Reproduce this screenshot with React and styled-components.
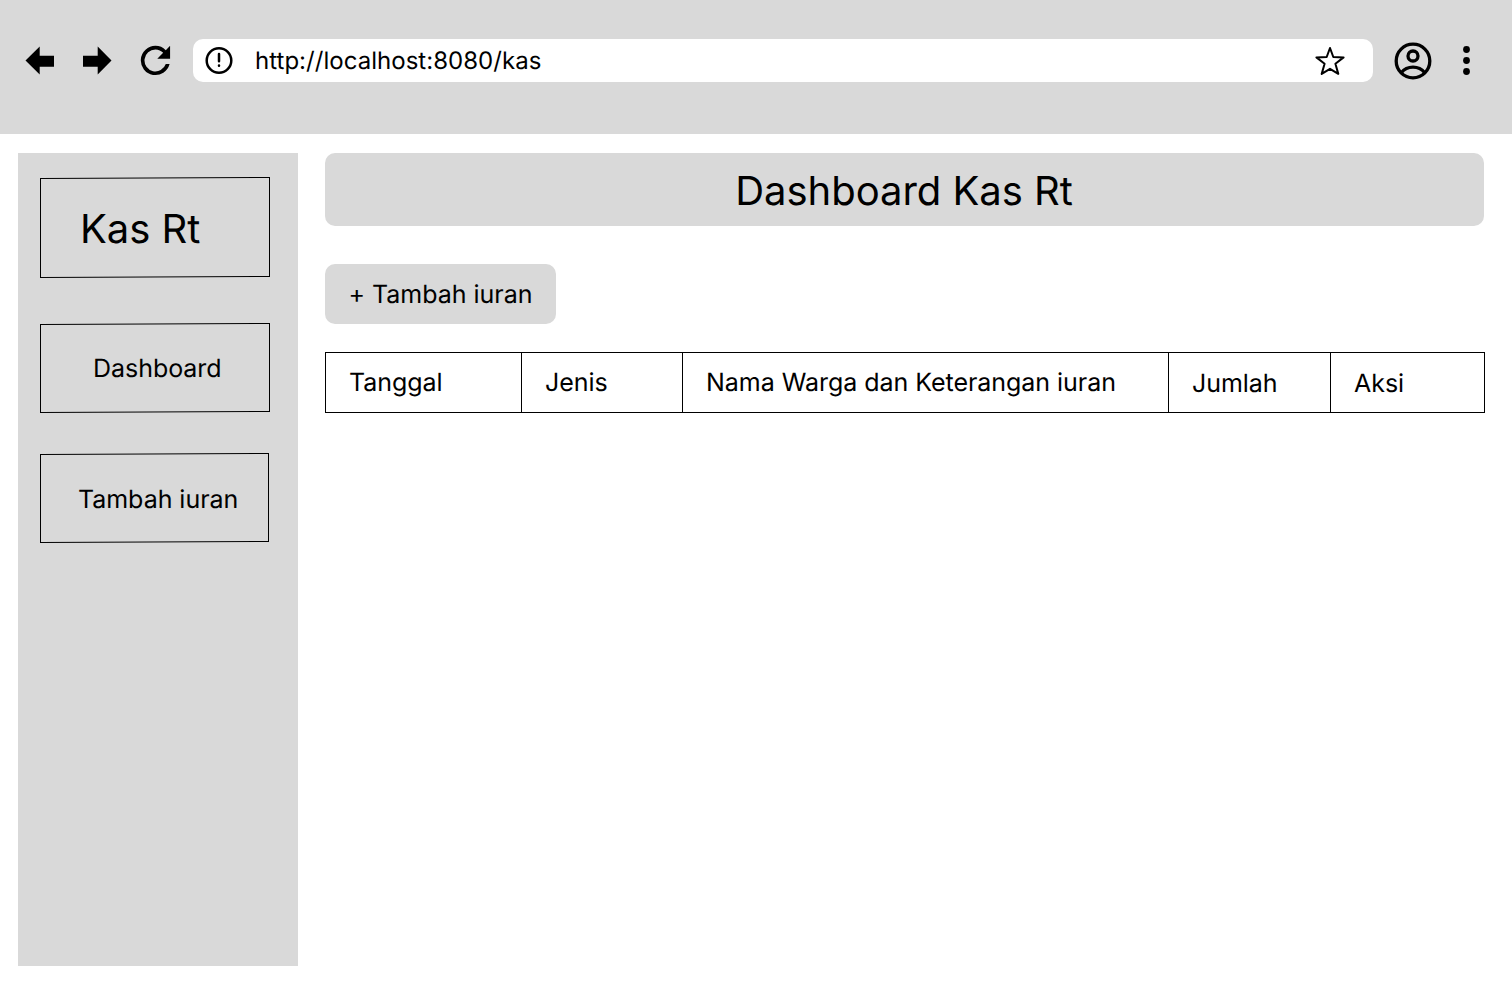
import React from 'react';
import styled, { createGlobalStyle } from 'styled-components';

const GlobalStyle = createGlobalStyle`
  *, *::before { box-sizing: border-box; }
  body {
    margin: 0;
    background: #fff;
    color: #000;
    font-family: Inter, "Liberation Sans", sans-serif;
    text-rendering: geometricPrecision;
  }
`;

const GREY = '#d9d9d9';

const Page = styled.div`
  display: flex;
  flex-direction: column;
  width: 1512px;
  height: 982px;
  overflow: hidden;
`;

const BrowserBar = styled.header`
  display: flex;
  align-items: flex-start;
  height: 134px;
  padding: 39px 36px 0 25px;
  background: ${GREY};
`;

const NavIcons = styled.nav`
  display: flex;
  align-items: center;
  height: 42px;
  width: 168px;
  gap: 27px;
`;

const Icon = styled.svg`
  display: block;
  flex: none;
`;

const AddressBar = styled.div`
  display: flex;
  align-items: center;
  width: 1180px;
  height: 43px;
  padding: 0 27px 0 11px;
  border-radius: 10px;
  background: #fff;
`;

const Url = styled.span`
  flex: 1;
  margin-left: 21px;
  font-size: 24px;
  line-height: 43px;
  letter-spacing: 0.03px;
`;

const AccountIcons = styled.div`
  display: flex;
  align-items: center;
  height: 43px;
  margin-left: 20px;
  gap: 28px;
`;

const Body = styled.div`
  display: flex;
  flex: 1;
  gap: 27px;
  padding: 19px 27px 16px 18px;
`;

const Sidebar = styled.aside`
  display: flex;
  flex-direction: column;
  width: 280px;
  padding: 24px 22px;
  background: ${GREY};
`;

const MenuBox = styled.div`
  position: relative;
  width: ${(p) => p.$width || 230}px;
  height: ${(p) => p.$height}px;
  margin-bottom: ${(p) => p.$after || 0}px;
  padding: ${(p) => p.$padding};
  font-size: ${(p) => p.$size || 25}px;
  line-height: ${(p) => p.$line || 30}px;
  letter-spacing: -0.04px;
  white-space: nowrap;

  &::before {
    content: '';
    position: absolute;
    inset: 0 0 1px;
    border: 1px solid #000;
    transform: translateY(0.5px) skewY(-0.25deg);
  }
`;

const Main = styled.main`
  display: flex;
  flex-direction: column;
  align-items: flex-start;
  width: 1160px;
`;

const Title = styled.h1`
  width: 1159px;
  height: 73px;
  margin: 0 0 38px;
  padding-right: 1px;
  border-radius: 10px;
  background: ${GREY};
  font-size: 40px;
  font-weight: 400;
  line-height: 75px;
  letter-spacing: -0.04px;
  text-align: center;
`;

const AddButton = styled.button`
  width: 231px;
  height: 60px;
  margin: 0 0 28px;
  padding: 2px 0 0;
  border: 0;
  border-radius: 10px;
  background: ${GREY};
  color: inherit;
  font: 25px/58px Inter, "Liberation Sans", sans-serif;
  letter-spacing: -0.03px;
  text-rendering: inherit;
  white-space: nowrap;
`;

const TableHead = styled.div`
  display: grid;
  grid-template-columns: 196px 161px 486px 162px 153px;
  width: 1160px;
  height: 61px;
  border: 1px solid #000;
`;

const HeadCell = styled.div`
  padding: ${(p) => p.$top || 1}px 0 0 23px;
  border-right: 1px solid #000;
  font-size: 25px;
  line-height: 59px;
  height: 59px;
  letter-spacing: -0.04px;
  white-space: nowrap;

  &:last-child { border-right: 0; }
`;

const BackIcon = () => (
  <Icon width="30" height="30" viewBox="0 0 30 30">
    <path d="M.5 15.5 14.7 1.5v9.2H29v11H14.7V29.5Z" />
  </Icon>
);

const ForwardIcon = () => (
  <Icon width="30" height="30" viewBox="0 0 30 30">
    <path d="M29.5 15.5 15.7 1.5v9.2H1v11h14.7V29.5Z" />
  </Icon>
);

const ReloadIcon = () => (
  <Icon width="32" height="32" viewBox="3 3 17.5 17.5">
    <path d="M17.65 6.35A7.96 7.96 0 0 0 12 4a8 8 0 1 0 7.73 10h-2.08A6 6 0 1 1 12 6c1.66 0 3.14.69 4.22 1.78L13 11h7V4z" />
  </Icon>
);

const InfoIcon = () => (
  <Icon width="30" height="30" viewBox="0 0 30 30" fill="none" stroke="#000" strokeWidth="2.5">
    <circle cx="15" cy="14.5" r="12.3" />
    <path d="M15 7.9v7.4M15 19.6v.2" strokeLinecap="round" />
  </Icon>
);

const StarIcon = () => (
  <Icon width="32" height="32" viewBox="0 0 32 32">
    <path
      d="M16 3 19.3 12 29.6 12.4 21.4 18.8 24.3 28.9 16 23.8 7.7 28.9 10.6 18.8 2.4 12.4 12.7 12Z"
      fill="none"
      stroke="#000"
      strokeWidth="2"
      strokeLinejoin="round"
    />
  </Icon>
);

const AccountIcon = () => (
  <Icon width="40" height="40" viewBox="0 0 40 40" fill="none" stroke="#000" strokeWidth="3.3">
    <circle cx="20" cy="20" r="16.8" />
    <circle cx="20" cy="15" r="5" />
    <path d="M8.2 31.8a15 15 0 0 1 23.6 0" />
  </Icon>
);

const MoreIcon = () => (
  <Icon width="12" height="32" viewBox="0 0 12 32">
    <circle cx="5.5" cy="4.5" r="3.4" />
    <circle cx="5.5" cy="15.5" r="3.4" />
    <circle cx="5.5" cy="26.5" r="3.4" />
  </Icon>
);

export default function App() {
  return (
    <Page>
      <GlobalStyle />
      <BrowserBar>
        <NavIcons>
          <BackIcon />
          <ForwardIcon />
          <ReloadIcon />
        </NavIcons>
        <AddressBar>
          <InfoIcon />
          <Url>http://localhost:8080/kas</Url>
          <StarIcon />
        </AddressBar>
        <AccountIcons>
          <AccountIcon />
          <MoreIcon />
        </AccountIcons>
      </BrowserBar>
      <Body>
        <Sidebar>
          <MenuBox $height={101} $after={45} $size={40} $line={48} $padding="28px 0 0 40px">Kas Rt</MenuBox>
          <MenuBox $height={90} $after={40} $padding="31px 0 0 53px">Dashboard</MenuBox>
          <MenuBox $height={90} $width={229} $padding="32px 0 0 38px">Tambah iuran</MenuBox>
        </Sidebar>
        <Main>
          <Title>Dashboard Kas Rt</Title>
          <AddButton>+ Tambah iuran</AddButton>
          <TableHead>
            <HeadCell>Tanggal</HeadCell>
            <HeadCell>Jenis</HeadCell>
            <HeadCell>Nama Warga dan Keterangan iuran</HeadCell>
            <HeadCell $top={2}>Jumlah</HeadCell>
            <HeadCell $top={2}>Aksi</HeadCell>
          </TableHead>
        </Main>
      </Body>
    </Page>
  );
}
